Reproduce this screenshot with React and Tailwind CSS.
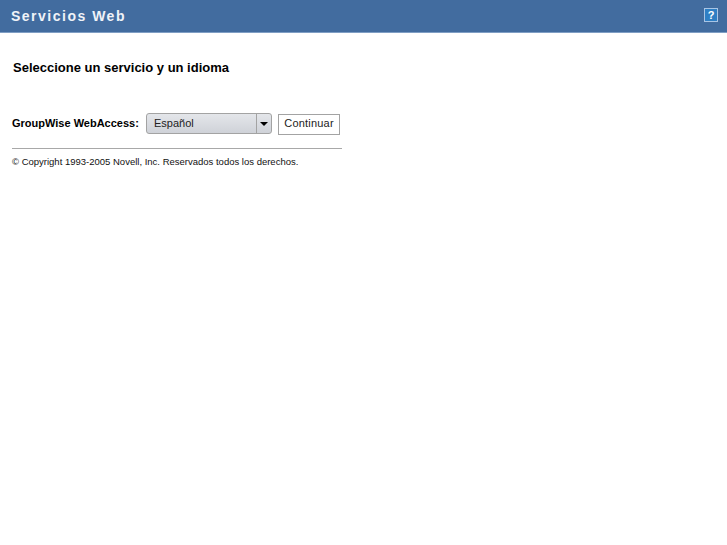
import React from 'react';

export default function App() {
    return (
        <div className="min-h-[545px] bg-white text-black font-['Liberation_Sans',Arial,sans-serif]">
            {/* Header bar */}
            <div className="h-[33px] bg-[#426c9f] border-b border-[#7f9ec4] flex items-center justify-between pl-[11px] pr-[9px]">
                <span className="font-bold text-[14px] tracking-[1.5px] text-[#f0f3f8]">Servicios Web</span>
                <div className="mb-[2px] w-[14px] h-[14px] border border-[#a9c4e4] bg-[#2f7fc4] flex items-center justify-center text-white text-[11px] font-bold leading-none">?</div>
            </div>

            <div className="pl-[13px]">
                <h1 className="mt-[27px] text-[13px] leading-[16px] font-bold">Seleccione un servicio y un idioma</h1>

                <div className="mt-[37px] flex items-start h-[22px] -ml-px">
                    <span className="text-[11px] leading-[20px] font-bold w-[134px]">GroupWise WebAccess:</span>
                    <div className="w-[126px] h-[21px] flex rounded-[3px] border border-[#a3a3a3] bg-gradient-to-b from-[#e4e6ea] to-[#cfd2d8] overflow-hidden">
                        <span className="flex-1 pl-[7px] text-[11px] leading-[18px] text-[#222]">Español</span>
                        <span className="w-[15px] border-l border-[#a3a3a3] flex items-center justify-center">
                            <span className="w-0 h-0 border-x-[4px] border-x-transparent border-t-[4px] border-t-black" />
                        </span>
                    </div>
                    <button className="ml-[6px] mt-px w-[62px] h-[21px] pb-[2px] border border-[#a3a3a3] bg-white text-[11px] tracking-[0.2px] text-[#222]">Continuar</button>
                </div>

                <div className="mt-[13px] w-[330px] -ml-px border-t border-[#a8a8a8]" />
                <p className="mt-[7px] -ml-px text-[9.5px] leading-[12px] text-[#111]">© Copyright 1993-2005 Novell, Inc. Reservados todos los derechos.</p>
            </div>
        </div>
    );
}
